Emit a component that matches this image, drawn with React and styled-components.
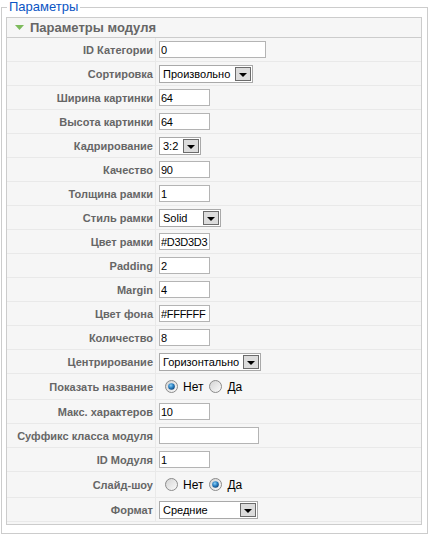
import React from 'react';
import styled, { createGlobalStyle } from 'styled-components';

const GlobalStyle = createGlobalStyle`
  body {
    margin: 0;
    background: #fff;
    font-family: "Liberation Sans", Arial, sans-serif;
  }
`;

const Fieldset = styled.fieldset`
  box-sizing: border-box;
  width: 427px;
  margin: 0 0 0 1px;
  padding: 0 5px 8px 4px;
  border: 1px solid #ccc;
  min-width: 0;
`;

const Legend = styled.legend`
  margin-left: 1px;
  padding: 0 2px;
  color: #0b55c4;
  font-size: 13px;
  line-height: 14px;
`;

const Panel = styled.div`
  margin-top: 3px;
  border: 1px solid #ccc;
  background: #f6f6f6;
  padding-bottom: 2px;
`;

const PanelTitle = styled.h3`
  margin: 0;
  height: 19px;
  display: flex;
  align-items: center;
  gap: 6px;
  padding-left: 8px;
  border-bottom: 1px solid #ccc;
  color: #666;
  font-size: 13px;
  font-weight: bold;
`;

const Row = styled.div`
  display: grid;
  grid-template-columns: 149px 1fr;
  height: ${({ $h }) => $h}px;
`;

const Key = styled.div`
  box-sizing: border-box;
  display: flex;
  align-items: center;
  justify-content: flex-end;
  padding-right: 2px;
  border-right: 1px solid #e9e9e9;
  border-bottom: 1px solid #e9e9e9;
  color: #666;
  font-size: 11px;
  font-weight: bold;
  white-space: nowrap;
`;

const Value = styled.div`
  box-sizing: border-box;
  display: flex;
  align-items: center;
  padding-left: 3px;
  border-bottom: 1px solid #e9e9e9;
`;

const TextInput = styled.input`
  box-sizing: border-box;
  width: ${({ $w }) => $w}px;
  height: 17px;
  margin: 0;
  padding: 0 1px;
  border: 1px solid #b4b4b4;
  background: #fff;
  color: #000;
  font-family: "Liberation Sans", Arial, sans-serif;
  font-size: 11px;
  letter-spacing: -0.3px;
  outline: none;
`;

const SelectBox = styled.div`
  box-sizing: border-box;
  display: flex;
  align-items: stretch;
  width: ${({ $w }) => $w}px;
  height: 18px;
  border: 1px solid #a9a9a9;
  background: #fff;
  color: #000;
  font-size: 11px;
`;

const SelectText = styled.span`
  flex: 1;
  display: flex;
  align-items: center;
  padding-left: 3px;
  overflow: hidden;
  white-space: nowrap;
`;

const ArrowButton = styled.span`
  box-sizing: border-box;
  width: 16px;
  margin: 1px;
  display: flex;
  align-items: center;
  justify-content: center;
  border: 1px solid #6b6b6b;
  background: #dcdcdc;

  &::after {
    content: '';
    margin-top: 2px;
    border-left: 4px solid transparent;
    border-right: 4px solid transparent;
    border-top: 4px solid #000;
  }
`;

const RadioGroup = styled.div`
  display: flex;
  align-items: center;
  padding-left: 6px;
  font-size: 12px;
  color: #000;
`;

const RadioLabel = styled.label`
  display: flex;
  align-items: center;
  gap: 5px;
  margin-right: 6px;
`;

const Radio = ({ checked }) => (
  <svg width="13" height="13" viewBox="0 0 13 13">
    <defs>
      <linearGradient id="rbg" x1="0" y1="0" x2="1" y2="1">
        <stop offset="0" stopColor="#d2d2d2" />
        <stop offset="1" stopColor="#fcfcfc" />
      </linearGradient>
      <radialGradient id="rdot" cx="0.4" cy="0.35" r="0.7">
        <stop offset="0" stopColor="#8fd0f5" />
        <stop offset="0.5" stopColor="#2b83c6" />
        <stop offset="1" stopColor="#0d3f73" />
      </radialGradient>
    </defs>
    <circle cx="6.5" cy="6.5" r="6" fill="url(#rbg)" stroke="#8a8a8a" />
    {checked && <circle cx="6.5" cy="6.5" r="3.3" fill="url(#rdot)" />}
  </svg>
);

const Arrow = () => (
  <svg width="9" height="5" viewBox="0 0 9 5">
    <polygon points="0,0 9,0 4.5,5" fill="#7dbb5c" />
  </svg>
);

const params = [
  { label: 'ID Категории', type: 'input', value: '0', w: 107 },
  { label: 'Сортировка', type: 'select', value: 'Произвольно', w: 94 },
  { label: 'Ширина картинки', type: 'input', value: '64', w: 51 },
  { label: 'Высота картинки', type: 'input', value: '64', w: 51 },
  { label: 'Кадрирование', type: 'select', value: '3:2', w: 42 },
  { label: 'Качество', type: 'input', value: '90', w: 51 },
  { label: 'Толщина рамки', type: 'input', value: '1', w: 51 },
  { label: 'Стиль рамки', type: 'select', value: 'Solid', w: 62 },
  { label: 'Цвет рамки', type: 'input', value: '#D3D3D3', w: 51 },
  { label: 'Padding', type: 'input', value: '2', w: 51 },
  { label: 'Margin', type: 'input', value: '4', w: 51 },
  { label: 'Цвет фона', type: 'input', value: '#FFFFFF', w: 51 },
  { label: 'Количество', type: 'input', value: '8', w: 51 },
  { label: 'Центрирование', type: 'select', value: 'Горизонтально', w: 102 },
  { label: 'Показать название', type: 'radio', value: 0 },
  { label: 'Макс. характеров', type: 'input', value: '10', w: 51 },
  { label: 'Суффикс класса модуля', type: 'input', value: '', w: 100 },
  { label: 'ID Модуля', type: 'input', value: '1', w: 51 },
  { label: 'Слайд-шоу', type: 'radio', value: 1 },
  { label: 'Формат', type: 'select', value: 'Средние', w: 99 },
];

const Field = ({ p }) => {
  if (p.type === 'select') {
    return (
      <SelectBox $w={p.w}>
        <SelectText>{p.value}</SelectText>
        <ArrowButton />
      </SelectBox>
    );
  }
  if (p.type === 'radio') {
    return (
      <RadioGroup>
        <RadioLabel><Radio checked={p.value === 0} />Нет</RadioLabel>
        <RadioLabel><Radio checked={p.value === 1} />Да</RadioLabel>
      </RadioGroup>
    );
  }
  return <TextInput $w={p.w} defaultValue={p.value} readOnly />;
};

export default function App() {
  return (
    <>
      <GlobalStyle />
      <Fieldset>
        <Legend>Параметры</Legend>
        <Panel>
          <PanelTitle>
            <Arrow />
            Параметры модуля
          </PanelTitle>
          {params.map((p) => (
            <Row key={p.label} $h={p.type === 'radio' ? 26 : 24}>
              <Key>{p.label}</Key>
              <Value>
                <Field p={p} />
              </Value>
            </Row>
          ))}
        </Panel>
      </Fieldset>
    </>
  );
}
